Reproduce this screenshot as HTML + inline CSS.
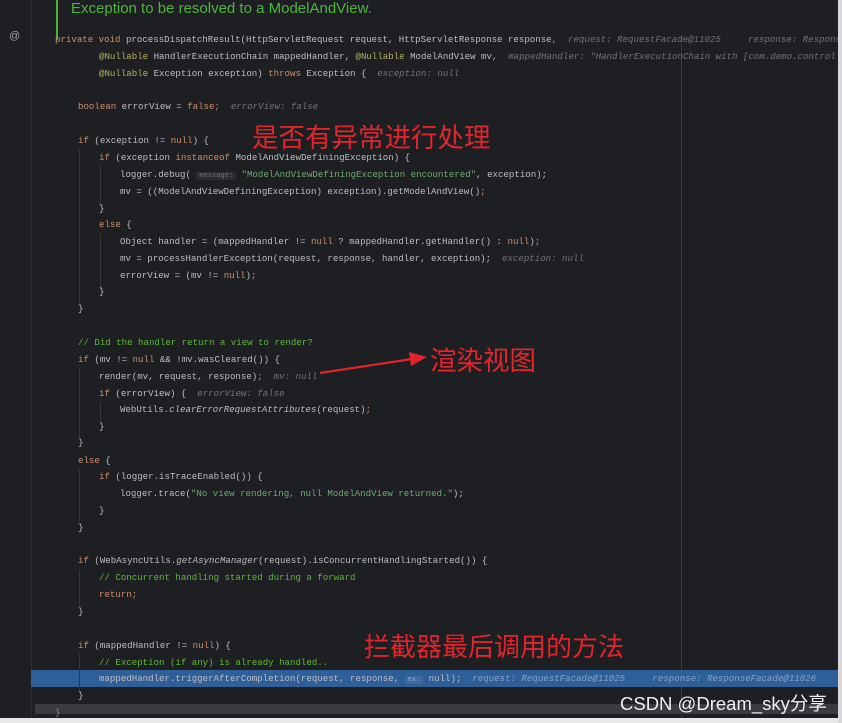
<!DOCTYPE html>
<html><head><meta charset="utf-8"><style>
html,body{margin:0;padding:0}
body{width:842px;height:723px;background:#1e1f22;position:relative;overflow:hidden;font-family:"Liberation Mono",monospace}
#w{position:absolute;left:0;top:0;width:842px;height:723px;overflow:hidden}
.l{position:absolute;left:0;height:17px;line-height:17px;font-size:9.1px;color:#bcbec4;white-space:pre}
.k{color:#cf8e6d}.a{color:#b3ae60}.c{color:#5fb83a}.h{color:#6f737a;font-style:italic}.s{color:#6aab73}.i{font-style:italic}
.g{position:absolute;width:1px;background:#35363a}
.cn{position:absolute;color:#e3242b;font-family:"Noto Sans CJK SC",sans-serif;white-space:nowrap}
</style></head><body><div id="w">
<div style="position:absolute;left:31px;top:0;width:1px;height:718px;background:#2b2c30"></div>
<div style="position:absolute;left:681px;top:35px;width:1px;height:683px;background:#393b40"></div>
<div style="position:absolute;left:56px;top:0;width:2px;height:40px;background:#4caf3a"></div>
<div style="position:absolute;left:71px;top:0px;font-family:'Liberation Sans',sans-serif;font-size:15px;color:#4cb63a">Exception to be resolved to a ModelAndView.</div>
<div style="position:absolute;left:9px;top:30px;font-size:11px;color:#a0a0a0;font-family:'Liberation Sans',sans-serif">@</div>
<div style="position:absolute;left:31px;top:670px;width:807px;height:17px;background:#2e5f98"></div>
<div style="position:absolute;left:35px;top:704px;width:807px;height:10px;background:#3a3b3f"></div>
<div style="position:absolute;left:0;top:718px;width:842px;height:5px;background:#e8e8e8"></div>
<div class="g" style="left:79px;top:149px;height:156px"></div>
<div class="g" style="left:100px;top:166px;height:40px"></div>
<div class="g" style="left:100px;top:233px;height:57px"></div>
<div class="g" style="left:79px;top:368px;height:70px"></div>
<div class="g" style="left:100px;top:402px;height:20px"></div>
<div class="g" style="left:79px;top:469px;height:53px"></div>
<div class="g" style="left:79px;top:570px;height:37px"></div>
<div class="g" style="left:79px;top:654px;height:38px"></div>

<div class="l" style="top:31px;left:55px"><span class="k">private void </span>processDispatchResult(HttpServletRequest request, HttpServletResponse response<span class="k">,</span>  <span class="h">request: RequestFacade@11025     response: ResponseFacade@11026</span></div>
<div class="l" style="top:48px;left:99px"><span class="a">@Nullable</span> HandlerExecutionChain mappedHandler, <span class="a">@Nullable</span> ModelAndView mv,  <span class="h">mappedHandler: "HandlerExecutionChain with [com.demo.controller</span></div>
<div class="l" style="top:65px;left:99px"><span class="a">@Nullable</span> Exception exception) <span class="k">throws</span> Exception {  <span class="h">exception: null</span></div>
<div class="l" style="top:98px;left:78px"><span class="k">boolean</span> errorView = <span class="k">false;</span>  <span class="h">errorView: false</span></div>
<div class="l" style="top:132px;left:78px"><span class="k">if</span> (exception != <span class="k">null</span>) {</div>
<div class="l" style="top:149px;left:99px"><span class="k">if</span> (exception <span class="k">instanceof</span> ModelAndViewDefiningException) {</div>
<div class="l" style="top:166px;left:120px">logger.debug( <span class="h" style="font-style:normal;background:#2b2d30;font-size:7px;padding:0 3px">message:</span> <span class="s">"ModelAndViewDefiningException encountered"</span>, exception);</div>
<div class="l" style="top:183px;left:120px">mv = ((ModelAndViewDefiningException) exception).getModelAndView()<span class="k">;</span></div>
<div class="l" style="top:200px;left:99px">}</div>
<div class="l" style="top:216px;left:99px"><span class="k">else</span> {</div>
<div class="l" style="top:233px;left:120px">Object handler = (mappedHandler != <span class="k">null</span> ? mappedHandler.getHandler() : <span class="k">null</span>)<span class="k">;</span></div>
<div class="l" style="top:250px;left:120px">mv = processHandlerException(request, response, handler, exception);  <span class="h">exception: null</span></div>
<div class="l" style="top:267px;left:120px">errorView = (mv != <span class="k">null</span>)<span class="k">;</span></div>
<div class="l" style="top:283px;left:99px">}</div>
<div class="l" style="top:300px;left:78px">}</div>
<div class="l" style="top:334px;left:78px"><span class="c">// Did the handler return a view to render?</span></div>
<div class="l" style="top:351px;left:78px"><span class="k">if</span> (mv != <span class="k">null</span> &amp;&amp; !mv.wasCleared()) {</div>
<div class="l" style="top:368px;left:99px">render(mv, request, response)<span class="k">;</span>  <span class="h">mv: null</span></div>
<div class="l" style="top:385px;left:99px"><span class="k">if</span> (errorView) {  <span class="h">errorView: false</span></div>
<div class="l" style="top:401px;left:120px">WebUtils.<span class="i">clearErrorRequestAttributes</span>(request)<span class="k">;</span></div>
<div class="l" style="top:418px;left:99px">}</div>
<div class="l" style="top:434px;left:78px">}</div>
<div class="l" style="top:452px;left:78px"><span class="k">else</span> {</div>
<div class="l" style="top:468px;left:99px"><span class="k">if</span> (logger.isTraceEnabled()) {</div>
<div class="l" style="top:485px;left:120px">logger.trace(<span class="s">"No view rendering, null ModelAndView returned."</span>);</div>
<div class="l" style="top:502px;left:99px">}</div>
<div class="l" style="top:519px;left:78px">}</div>
<div class="l" style="top:552px;left:78px"><span class="k">if</span> (WebAsyncUtils.<span class="i">getAsyncManager</span>(request).isConcurrentHandlingStarted()) {</div>
<div class="l" style="top:569px;left:99px"><span class="c">// Concurrent handling started during a forward</span></div>
<div class="l" style="top:586px;left:99px"><span class="k">return;</span></div>
<div class="l" style="top:603px;left:78px">}</div>
<div class="l" style="top:637px;left:78px"><span class="k">if</span> (mappedHandler != <span class="k">null</span>) {</div>
<div class="l" style="top:654px;left:99px"><span class="c">// Exception (if any) is already handled..</span></div>
<div class="l" style="top:670px;left:99px">mappedHandler.triggerAfterCompletion(request, response, <span style="background:#3c6a9e;color:#8fa8c8;font-size:7px;padding:0 3px">ex:</span> null);  <span class="h" style="color:#88a4c8">request: RequestFacade@11025     response: ResponseFacade@11026</span></div>
<div class="l" style="top:687px;left:78px">}</div>
<div class="l" style="top:704px;left:55px;color:#888">}</div>

<div class="cn" style="left:252px;top:116px;font-size:26.5px">是否有异常进行处理</div>
<div class="cn" style="left:430px;top:339px;font-size:26.5px">渲染视图</div>
<div class="cn" style="left:364px;top:627px;font-size:26px">拦截器最后调用的方法</div>
<svg style="position:absolute;left:0;top:0" width="842" height="723"><line x1="320" y1="373" x2="412" y2="359" stroke="#e3242b" stroke-width="2.2"/><polygon points="427,357 409,352 411,366" fill="#e3242b"/></svg>
<div style="position:absolute;left:620px;top:690px;font-family:'Liberation Sans','Noto Sans CJK SC',sans-serif;font-size:18.5px;color:#f0f0f0">CSDN @Dream_sky分享</div>
<div style="position:absolute;left:838px;top:0;width:4px;height:723px;background:#d8d8d8"></div>
</div></body></html>
